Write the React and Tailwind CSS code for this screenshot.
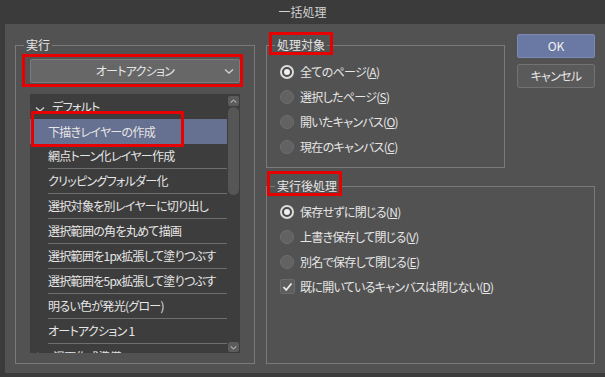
import React from "react";

const rows = [
  "下描きレイヤーの作成",
  "網点トーン化レイヤー作成",
  "クリッピングフォルダー化",
  "選択対象を別レイヤーに切り出し",
  "選択範囲の角を丸めて描画",
  "選択範囲を1px拡張して塗りつぶす",
  "選択範囲を5px拡張して塗りつぶす",
  "明るい色が発光(グロー)",
  "オートアクション 1",
];

function Chevron({ dir = "down", className = "" }) {
  const d = {
    down: "M1 1.5 L5 5 L9 1.5",
    up: "M1 4.5 L5 1 L9 4.5",
    right: "M1.5 1 L5 4.5 L1.5 8",
  }[dir];
  return (
    <svg width="10" height={dir === "right" ? 9 : 6} viewBox={dir === "right" ? "0 0 10 9" : "0 0 10 6"} className={className}>
      <path d={d} fill="none" stroke="currentColor" strokeWidth="1.4" />
    </svg>
  );
}

function Radio({ checked }) {
  if (checked)
    return (
      <span className="w-[14px] h-[14px] rounded-full border-2 border-[#dcdcdc] bg-[#4a4a4a] flex items-center justify-center shrink-0">
        <span className="w-[6px] h-[6px] rounded-full bg-[#f0f0f0]" />
      </span>
    );
  return <span className="w-[14px] h-[14px] rounded-full bg-[#626262] border border-[#6e6e6e] shrink-0" />;
}

function Option({ label, keyChar, checked }) {
  return (
    <div className="h-[25px] flex items-center gap-[6px] whitespace-nowrap">
      <Radio checked={checked} />
      <span>
        {label}(<span className="underline">{keyChar}</span>)
      </span>
    </div>
  );
}

function Legend({ children }) {
  return <legend className="ml-[8px] px-[2px] text-[12px] leading-[16px] tracking-normal">{children}</legend>;
}

export default function App() {
  return (
    <div className="relative w-[605px] h-[377px] bg-[#3b3b3b] flex flex-col overflow-hidden text-[#e6e6e6] text-[12px] tracking-[-0.7px] font-['Noto_Sans_CJK_JP',sans-serif] [font-feature-settings:'palt']">
      <div className="h-[24px] flex items-center justify-center text-[#d2d2d2] tracking-normal">一括処理</div>

      <div className="ml-[5px] h-[349px] bg-[#525252] flex gap-[11px] pl-[10px] pr-[10px] pt-[13px]">
        {/* left: 実行 */}
        <fieldset className="w-[240px] h-[327px] border border-[#7a7a7a]">
          <Legend>実行</Legend>
          <div className="px-[14px] pt-[6px]">
            <div className="h-[24px] bg-[#676767] border border-[#7c7c7c] rounded-[2px] relative flex items-center justify-center">
              <span>オートアクション</span>
              <Chevron className="absolute right-[5px] top-[8px] text-[#cfcfcf]" />
            </div>

            <div className="mt-[11px] h-[259px] bg-[#3d3d3d] flex overflow-hidden">
              <div className="flex-1 flex flex-col whitespace-nowrap">
                <div className="h-[25px] shrink-0 flex items-center pl-[5px] gap-[7px]">
                  <Chevron className="text-[#cfcfcf] mt-[4px]" />
                  <span>デフォルト</span>
                </div>
                {rows.map((r, i) => (
                  <div key={r} className={`h-[25px] shrink-0 pl-[18px] ${i === 0 ? "bg-[#667090]" : ""}`}>
                    <div className={`h-[25px] flex items-center ${i === 0 ? "" : "border-b border-[#6e6e6e]"}`}>{r}</div>
                  </div>
                ))}
                <div className="h-[25px] shrink-0 flex items-center pl-[6px] gap-[7px]">
                  <Chevron dir="right" className="text-[#cfcfcf]" />
                  <span>漫画作成準備</span>
                </div>
              </div>
              <div className="w-[13px] shrink-0 flex flex-col px-[1px] pt-[2px] pb-[1px]">
                <div className="h-[10px] bg-[#5b5b5b] rounded-[2px] flex items-center justify-center text-[#d8d8d8]">
                  <Chevron dir="up" className="w-[7px] h-[5px]" />
                </div>
                <div className="mt-[1px] h-[88px] rounded-full bg-[#565656]" />
                <div className="mt-auto h-[10px] bg-[#5b5b5b] rounded-[2px] flex items-center justify-center text-[#d8d8d8]">
                  <Chevron className="w-[7px] h-[5px]" />
                </div>
              </div>
            </div>
          </div>
        </fieldset>

        {/* right column */}
        <div className="flex-1 flex flex-col">
          <div className="flex justify-between items-start">
            <fieldset className="w-[239px] h-[131px] border border-[#7a7a7a]">
              <Legend>処理対象</Legend>
              <div className="pl-[13px] pt-[6px]">
                <Option label="全てのページ" keyChar="A" checked />
                <Option label="選択したページ" keyChar="S" />
                <Option label="開いたキャンバス" keyChar="O" />
                <Option label="現在のキャンバス" keyChar="C" />
              </div>
            </fieldset>
            <div className="w-[78px] -mt-[3px] flex flex-col gap-[6px]">
              <div className="h-[24px] bg-[#6a79a3] border border-[#7b8ab2] rounded-[2px] flex items-center justify-center text-[#f2f2f2] tracking-normal">OK</div>
              <div className="h-[24px] bg-[#5a5a5a] border border-[#727272] rounded-[2px] flex items-center justify-center">キャンセル</div>
            </div>
          </div>

          <fieldset className="mt-[10px] h-[186px] border border-[#7a7a7a]">
            <Legend>実行後処理</Legend>
            <div className="pl-[13px] pt-[5px]">
              <Option label="保存せずに閉じる" keyChar="N" checked />
              <Option label="上書き保存して閉じる" keyChar="V" />
              <Option label="別名で保存して閉じる" keyChar="E" />
              <div className="h-[25px] flex items-center gap-[5px] whitespace-nowrap">
                <span className="w-[15px] h-[15px] bg-[#5e5e5e] border border-[#6a6a6a] rounded-[2px] flex items-center justify-center shrink-0">
                  <svg width="11" height="10" viewBox="0 0 11 10">
                    <path d="M1.5 5 L4.2 8 L9.5 1.5" fill="none" stroke="#f0f0f0" strokeWidth="1.7" />
                  </svg>
                </span>
                <span>
                  既に開いているキャンバスは閉じない(<span className="underline">D</span>)
                </span>
              </div>
            </div>
          </fieldset>
        </div>
      </div>

      {/* red annotation boxes */}
      <div className="absolute left-[22px] top-[54px] w-[221px] h-[33px] border-[3px] border-[#e60000]" />
      <div className="absolute left-[31px] top-[111px] w-[153px] h-[36px] border-[3px] border-[#e60000]" />
      <div className="absolute left-[269px] top-[32px] w-[64px] h-[23px] border-[3px] border-[#e60000]" />
      <div className="absolute left-[267px] top-[171px] w-[75px] h-[25px] border-[3px] border-[#e60000]" />
    </div>
  );
}
